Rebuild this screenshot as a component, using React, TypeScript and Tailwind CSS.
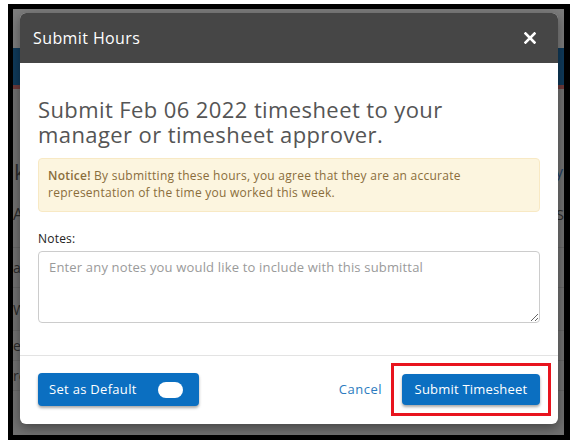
import React from "react";

export default function App() {
  const font = { fontFamily: '"Open Sans", "Liberation Sans", sans-serif' };
  return (
    <div className="w-[575px] h-[447px] bg-white pl-[8px] pt-[4px]" style={font}>
      <div className="relative w-[562px] h-[436px] border-[5px] border-r-[6px] border-black bg-[#747474] overflow-hidden">
        {/* backdrop page */}
        <div className="flex flex-col h-full">
          <div className="h-[39px] bg-[#7c7c7c]" />
          <div className="h-[37px] bg-[#0f3a5a]" />
          <div className="h-[4px] bg-[#6e3b3b]" />
          <div className="flex-1 bg-[#717171] flex flex-col text-[#2a2a2a] text-[22px]">
            <div className="h-[62px]" />
            <div className="h-[40px] flex items-center justify-between pl-[1px]">
              <span>k</span>
              <span className="text-[15px] text-[#1d3f66] pr-[1px]">ly</span>
            </div>
            <div className="h-[46px] flex items-center justify-between text-[16px]">
              <span>A</span>
              <span className="text-[14px]">S</span>
            </div>
            <div className="h-[11px] border-b border-[#666]" />
            <div className="h-[40px] border-b border-[#666] text-[14px] flex items-center">ar</div>
            <div className="h-[43px] border-b border-[#666] text-[14px] flex items-center">W</div>
            <div className="h-[30px] border-b border-[#666] text-[14px] flex items-center">e</div>
            <div className="h-[30px] border-b border-[#666] text-[14px] flex items-center">re</div>
          </div>
        </div>

        {/* modal */}
        <div className="absolute left-[7px] top-[4px] w-[538px] h-[411px] bg-white rounded-[6px] shadow-[0_4px_12px_rgba(0,0,0,0.4)] flex flex-col overflow-hidden">
          <div className="h-[50px] bg-[#464646] flex items-center justify-between pl-[13px] pr-[22px] shrink-0">
            <span className="text-white text-[16px] font-medium tracking-[0.4px]">Submit Hours</span>
            <svg width="12" height="12" viewBox="0 0 12 12">
              <path d="M1.5 1.5 L10.5 10.5 M10.5 1.5 L1.5 10.5" stroke="white" strokeWidth="2.6" strokeLinecap="square" />
            </svg>
          </div>
          <div className="px-[18px] pt-[34px] flex flex-col">
            <h1 className="flex flex-col text-[22px] leading-[25px] text-[#555] font-normal tracking-[0.4px]">
              <span className="block h-[25px]">Submit Feb 06 2022 timesheet to your</span>
              <span className="block h-[25px]">manager or timesheet approver.</span>
            </h1>
            <div className="mt-[11px] h-[54px] bg-[#fcf5df] border border-[#f8e9c4] rounded-[4px] px-[9px] pt-[8px] text-[12px] leading-[17px] text-[#8a6d3b] tracking-[0.25px]">
              <b className="font-semibold">Notice!</b> By submitting these hours, you agree that they are an accurate
              <br />
              representation of the time you worked this week.
            </div>
            <label className="mt-[18px] text-[12px] font-medium text-[#222] leading-[17px] tracking-[0.2px]">Notes:</label>
            <textarea
              className="mt-[4px] h-[72px] w-full block border border-[#ccc] rounded-[4px] px-[10px] pt-[6px] text-[13px] tracking-[0.17px] placeholder-[#9a9a9a] outline-none"
              placeholder="Enter any notes you would like to include with this submittal"
            />
          </div>
          <div className="mt-[32px] border-t border-[#e3e3e3]" />
          <div className="flex items-center justify-between px-[18px] pt-[17px]">
            <button className="w-[161px] h-[33px] bg-[#0b6fc1] rounded-[4px] shadow-[0_2px_3px_rgba(0,0,0,0.35)] flex items-center justify-between pl-[11px] pr-[16px] text-white text-[13px] tracking-[0.3px]">
              <span>Set as Default</span>
              <span className="w-[25px] h-[16px] bg-white rounded-full" />
            </button>
            <div className="flex items-center">
              <span className="text-[13px] text-[#2b7bc0] mr-[9px] tracking-[0.5px]">Cancel</span>
              <div className="border-[3px] border-[#e8141e] p-[8px] -my-[11px] -mr-[11px]">
                <button className="w-[138px] h-[31px] bg-[#0b6fc1] rounded-[4px] shadow-[0_2px_3px_rgba(0,0,0,0.35)] text-white text-[13px] font-medium tracking-[0.2px]">
                  Submit Timesheet
                </button>
              </div>
            </div>
          </div>
        </div>
      </div>
    </div>
  );
}
